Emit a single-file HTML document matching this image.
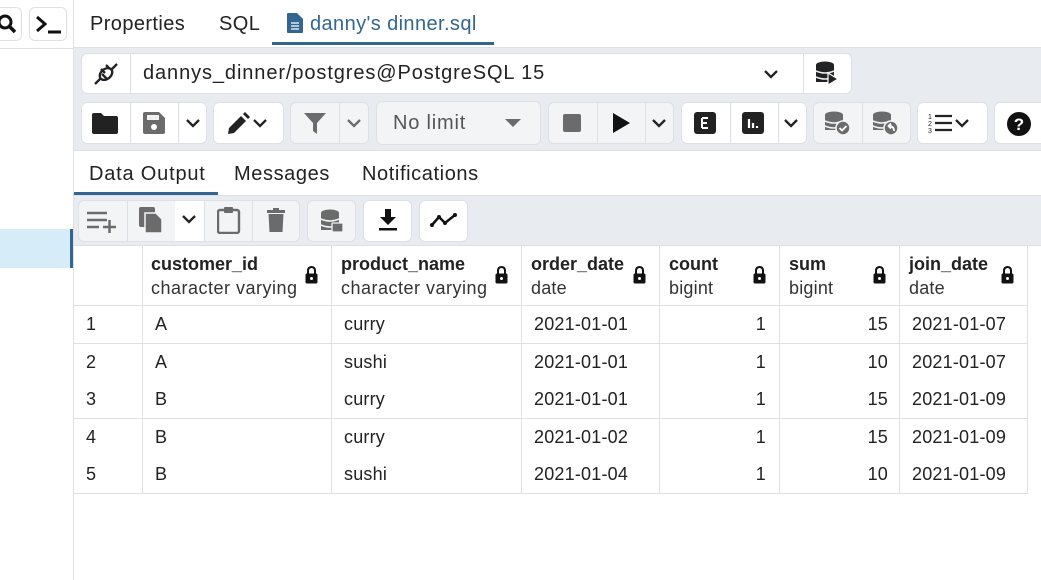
<!DOCTYPE html>
<html><head><style>
*{box-sizing:border-box;margin:0;padding:0}
body{width:1041px;height:580px;overflow:hidden;background:#fff;font-family:"Liberation Sans",sans-serif;color:#222;position:relative}
.a{position:absolute}
.btn{position:absolute;background:#fff;border:1px solid #dde0e6;border-radius:6px}
.sep{position:absolute;top:0;bottom:0;width:1px;background:#dde0e6}
.t{font-size:20px;position:absolute;white-space:nowrap;letter-spacing:0.4px}
.cell{position:absolute;font-size:18px;white-space:nowrap;color:#222;letter-spacing:0.2px}
.hl{position:absolute;height:1px;background:#dde0e6}
.vl{position:absolute;width:1px;background:#dde0e6}
svg{position:absolute}
</style></head><body>
<!-- sidebar -->
<div class="a" style="left:73px;top:0;width:1px;height:580px;background:#dde0e6"></div>
<div class="a" style="left:0;top:48px;width:73px;height:1px;background:#dde0e6"></div>
<div class="a" style="left:0;top:229px;width:71px;height:39px;background:#d6ecf9"></div>
<div class="a" style="left:70px;top:229px;width:3px;height:39px;background:#326690"></div>
<div class="btn" style="left:-10px;top:7px;width:32px;height:34px"></div>
<svg style="left:0;top:13px" width="20" height="22" viewBox="0 0 20 22"><circle cx="5" cy="9" r="6" fill="none" stroke="#111" stroke-width="3"/><line x1="9" y1="13" x2="15" y2="19" stroke="#111" stroke-width="3.5"/></svg>
<div class="btn" style="left:29px;top:7px;width:38px;height:34px"></div>
<svg style="left:35px;top:14px" width="28" height="20" viewBox="0 0 28 20"><path d="M2 3 L10 10 L2 17" fill="none" stroke="#111" stroke-width="3"/><line x1="13" y1="18" x2="26" y2="18" stroke="#111" stroke-width="3"/></svg>
<!-- tabs -->
<div class="t" style="left:90px;top:13px">Properties</div>
<div class="t" style="left:219px;top:13px">SQL</div>
<svg style="left:287px;top:13px" width="16" height="20" viewBox="0 0 16 20"><path d="M0 1 Q0 0 1 0 H10 L16 6 V19 Q16 20 15 20 H1 Q0 20 0 19Z" fill="#326690"/><path d="M4 10H12M4 13H12M4 16H12" stroke="#fff" stroke-width="1.3"/></svg>
<div class="t" style="left:310px;top:13px;color:#326690">danny's dinner.sql</div>
<div class="a" style="left:272px;top:42px;width:222px;height:3px;background:#326690"></div>
<div class="a" style="left:74px;top:47px;width:967px;height:1px;background:#dde0e6"></div>
<!-- toolbar area -->
<div class="a" style="left:74px;top:48px;width:967px;height:102px;background:#e8ebf0"></div>
<div class="btn" style="left:81px;top:53px;width:771px;height:41px"><div class="sep" style="left:48px"></div><div class="sep" style="left:721px"></div></div>
<svg style="left:92px;top:61px" width="28" height="26" viewBox="0 0 28 26"><g fill="none" stroke="#222" stroke-width="2.3"><ellipse cx="14" cy="13" rx="7" ry="5" transform="rotate(-40 14 13)"/><path d="M3 23 L8 18 M20 8 L25 3 M9 8 L13 12 M14 4 L18 8 M10 13 L15 18"/></g></svg>
<div class="t" style="left:143px;top:62px;letter-spacing:0.9px">dannys_dinner/postgres@PostgreSQL 15</div>
<svg style="left:763px;top:69px" width="16" height="10" viewBox="0 0 16 10"><path d="M2 2 L8 8 L14 2" fill="none" stroke="#222" stroke-width="2.3"/></svg>
<svg style="left:815px;top:61px" width="24" height="25" viewBox="0 0 24 25"><ellipse cx="10" cy="4" rx="9" ry="3.5" fill="#222"/><rect x="1" y="4" width="18" height="17" fill="#222"/><path d="M1 10 Q10 14 19 10 M1 16 Q10 20 19 16" stroke="#e8ebf0" stroke-width="1.6" fill="none"/><path d="M13 12 L23 18 L13 24Z" fill="#222" stroke="#fff" stroke-width="1.2"/></svg>

<div class="btn" style="left:81px;top:102px;width:126px;height:42px"><div class="sep" style="left:48px"></div><div class="sep" style="left:96px"></div></div>
<svg style="left:92px;top:113px" width="26" height="21" viewBox="0 0 26 21"><path d="M0 2 Q0 0 2 0 H9 L12 3 H24 Q26 3 26 5 V19 Q26 21 24 21 H2 Q0 21 0 19Z" fill="#222"/></svg>
<svg style="left:143px;top:112px" width="22" height="22" viewBox="0 0 22 22"><path d="M0 2 Q0 0 2 0 H16 L22 6 V20 Q22 22 20 22 H2 Q0 22 0 20Z" fill="#6b6b6b"/><rect x="4" y="3" width="12" height="5" fill="#fff" opacity=".9"/><circle cx="11" cy="15" r="3" fill="#fff"/></svg>
<svg style="left:185px;top:118px" width="16" height="10" viewBox="0 0 16 10"><path d="M2 2 L8 8 L14 2" fill="none" stroke="#222" stroke-width="2.3"/></svg>
<div class="btn" style="left:213px;top:102px;width:71px;height:42px"></div>
<svg style="left:226px;top:112px" width="44" height="24" viewBox="0 0 44 24"><path d="M2 22 L3 16 L15 4 L20 9 L8 21Z" fill="#222"/><path d="M17 2 L19 0 L24 5 L22 7Z" fill="#222"/><path d="M28 8 L34 14 L40 8" fill="none" stroke="#222" stroke-width="2.3"/></svg>
<div class="btn" style="left:290px;top:102px;width:79px;height:42px;background:#f3f4f6"><div class="sep" style="left:48px"></div></div>
<svg style="left:304px;top:113px" width="22" height="21" viewBox="0 0 22 21"><path d="M0 0 H22 L13 10 V21 L9 18 V10Z" fill="#6b6b6b"/></svg>
<svg style="left:346px;top:118px" width="16" height="10" viewBox="0 0 16 10"><path d="M2 2 L8 8 L14 2" fill="none" stroke="#6b6b6b" stroke-width="2.3"/></svg>
<div class="btn" style="left:376px;top:101px;width:165px;height:44px;background:#f3f4f6"></div>
<div class="t" style="left:393px;top:112px;color:#555;letter-spacing:0.8px">No limit</div>
<svg style="left:505px;top:118px" width="16" height="10" viewBox="0 0 16 10"><path d="M0 1 H16 L8 9Z" fill="#6b6b6b"/></svg>
<div class="btn" style="left:548px;top:102px;width:126px;height:42px;background:#f3f4f6"><div class="sep" style="left:48px"></div><div class="sep" style="left:96px"></div></div>
<div class="a" style="left:563px;top:114px;width:18px;height:18px;background:#6b6b6b;border-radius:2px"></div>
<svg style="left:613px;top:113px" width="18" height="20" viewBox="0 0 18 20"><path d="M0 0 L17 10 L0 20Z" fill="#111"/></svg>
<svg style="left:651px;top:118px" width="16" height="10" viewBox="0 0 16 10"><path d="M2 2 L8 8 L14 2" fill="none" stroke="#222" stroke-width="2.3"/></svg>
<div class="btn" style="left:681px;top:102px;width:126px;height:42px"><div class="sep" style="left:48px"></div><div class="sep" style="left:96px"></div></div>
<svg style="left:694px;top:112px" width="22" height="22" viewBox="0 0 22 22"><rect width="22" height="22" rx="3" fill="#222"/><path d="M8 6 H14 M8 11 H13 M8 16 H14 M8 6 V16" stroke="#fff" stroke-width="2" fill="none"/></svg>
<svg style="left:742px;top:112px" width="22" height="22" viewBox="0 0 22 22"><rect width="22" height="22" rx="3" fill="#222"/><path d="M7 7 V16 M11 11 V16 M15 14 V16" stroke="#fff" stroke-width="2.2"/></svg>
<svg style="left:783px;top:118px" width="16" height="10" viewBox="0 0 16 10"><path d="M2 2 L8 8 L14 2" fill="none" stroke="#222" stroke-width="2.3"/></svg>
<div class="btn" style="left:813px;top:102px;width:98px;height:42px;background:#f3f4f6"><div class="sep" style="left:48px"></div></div>
<svg style="left:824px;top:111px" width="28" height="26" viewBox="0 0 28 26"><ellipse cx="10" cy="4" rx="9" ry="3.5" fill="#6b6b6b"/><rect x="1" y="4" width="18" height="15" fill="#6b6b6b"/><path d="M1 10 Q10 14 19 10 M1 15 Q10 19 19 15" stroke="#f3f4f6" stroke-width="1.6" fill="none"/><circle cx="19" cy="17" r="7" fill="#6b6b6b" stroke="#f3f4f6" stroke-width="1.5"/><path d="M15.5 17 L18 19.5 L22.5 15" stroke="#fff" stroke-width="1.8" fill="none"/></svg>
<svg style="left:872px;top:111px" width="28" height="26" viewBox="0 0 28 26"><ellipse cx="10" cy="4" rx="9" ry="3.5" fill="#6b6b6b"/><rect x="1" y="4" width="18" height="15" fill="#6b6b6b"/><path d="M1 10 Q10 14 19 10 M1 15 Q10 19 19 15" stroke="#f3f4f6" stroke-width="1.6" fill="none"/><circle cx="19" cy="17" r="7" fill="#6b6b6b" stroke="#f3f4f6" stroke-width="1.5"/><path d="M22 20 Q22 15 17 15 M19 12.5 L16.5 15 L19 17.5" stroke="#fff" stroke-width="1.8" fill="none"/></svg>
<div class="btn" style="left:917px;top:102px;width:71px;height:42px"></div>
<svg style="left:928px;top:112px" width="46" height="22" viewBox="0 0 46 22"><text x="0" y="7" font-size="7" font-family="Liberation Sans" fill="#222">1</text><text x="0" y="14" font-size="7" font-family="Liberation Sans" fill="#222">2</text><text x="0" y="21" font-size="7" font-family="Liberation Sans" fill="#222">3</text><path d="M7 4 H24 M7 11 H24 M7 18 H24" stroke="#222" stroke-width="2.3"/><path d="M28 8 L34 14 L40 8" fill="none" stroke="#222" stroke-width="2.3"/></svg>
<div class="btn" style="left:994px;top:102px;width:60px;height:42px"></div>
<svg style="left:1007px;top:112px" width="24" height="24" viewBox="0 0 24 24"><circle cx="12" cy="12" r="12" fill="#111"/><text x="12" y="18" text-anchor="middle" font-size="17" font-weight="bold" font-family="Liberation Sans" fill="#fff">?</text></svg>
<div class="a" style="left:74px;top:150px;width:967px;height:1px;background:#dde0e6"></div>
<!-- data output tabs -->
<div class="t" style="left:89px;top:163px;letter-spacing:0.8px">Data Output</div>
<div class="t" style="left:234px;top:163px;letter-spacing:0.6px">Messages</div>
<div class="t" style="left:362px;top:163px;letter-spacing:0.6px">Notifications</div>
<div class="a" style="left:74px;top:192px;width:144px;height:3px;background:#326690"></div>
<div class="a" style="left:74px;top:195px;width:967px;height:50px;background:#e8ebf0;border-top:1px solid #dde0e6"></div>
<div class="btn" style="left:78px;top:200px;width:222px;height:42px;background:#f3f4f6"><div class="sep" style="left:48px"></div><div class="sep" style="left:96px"></div><div class="sep" style="left:125px"></div><div class="sep" style="left:173px"></div></div>
<div class="a" style="left:175px;top:201px;width:29px;height:40px;background:#fff"></div>
<svg style="left:87px;top:211px" width="30" height="22" viewBox="0 0 30 22"><path d="M0 2 H20 M0 9 H20 M0 16 H12 M16 16 H29 M22.5 9 V22" stroke="#6b6b6b" stroke-width="2.5"/></svg>
<svg style="left:139px;top:207px" width="24" height="27" viewBox="0 0 24 27"><rect x="0" y="0" width="16" height="20" rx="2" fill="#6b6b6b"/><path d="M6 6 H17 L23 12 V26 H6Z" fill="#6b6b6b" stroke="#f3f4f6" stroke-width="1.5"/></svg>
<svg style="left:181px;top:214px" width="16" height="10" viewBox="0 0 16 10"><path d="M2 2 L8 8 L14 2" fill="none" stroke="#222" stroke-width="2.3"/></svg>
<svg style="left:217px;top:207px" width="24" height="27" viewBox="0 0 24 27"><rect x="1" y="3" width="21" height="23" rx="2" fill="none" stroke="#6b6b6b" stroke-width="2.4"/><rect x="7" y="0" width="9" height="6" rx="1" fill="#6b6b6b"/></svg>
<svg style="left:267px;top:208px" width="18" height="24" viewBox="0 0 18 24"><rect x="0" y="2" width="18" height="3" fill="#6b6b6b"/><rect x="6" y="0" width="6" height="3" fill="#6b6b6b"/><path d="M1.5 6 H16.5 L15.5 24 H2.5Z" fill="#6b6b6b"/></svg>
<div class="btn" style="left:307px;top:200px;width:49px;height:42px;background:#f3f4f6"></div>
<svg style="left:320px;top:209px" width="24" height="24" viewBox="0 0 24 24"><ellipse cx="10" cy="4" rx="9" ry="3.5" fill="#6b6b6b"/><rect x="1" y="4" width="18" height="17" fill="#6b6b6b"/><path d="M1 10 Q10 14 19 10 M1 16 Q10 20 19 16" stroke="#f3f4f6" stroke-width="1.6" fill="none"/><rect x="12" y="14" width="11" height="9" rx="1" fill="#6b6b6b" stroke="#f3f4f6" stroke-width="1.3"/></svg>
<div class="btn" style="left:363px;top:200px;width:49px;height:42px"></div>
<svg style="left:379px;top:209px" width="18" height="22" viewBox="0 0 18 22"><path d="M6 0 H12 V8 H17 L9 16 L1 8 H6Z" fill="#111"/><rect x="0" y="19" width="18" height="2.5" fill="#111"/></svg>
<div class="btn" style="left:419px;top:200px;width:49px;height:42px"></div>
<svg style="left:430px;top:212px" width="28" height="16" viewBox="0 0 28 16"><path d="M2 13 L9 5 L15 11 L25 3" fill="none" stroke="#111" stroke-width="2.5"/><circle cx="2" cy="13" r="2" fill="#111"/><circle cx="9" cy="5" r="2" fill="#111"/><circle cx="15" cy="11" r="2" fill="#111"/><circle cx="25" cy="3" r="2" fill="#111"/></svg>
<!-- table -->
<div class="hl" style="left:74px;top:245px;width:967px"></div>
<div class="hl" style="left:74px;top:305px;width:954px"></div>
<div class="hl" style="left:74px;top:343px;width:954px"></div>
<div class="hl" style="left:74px;top:418px;width:954px"></div>
<div class="hl" style="left:74px;top:493px;width:954px"></div>
<div class="vl" style="left:142px;top:245px;height:248px"></div>
<div class="vl" style="left:331px;top:245px;height:248px"></div>
<div class="vl" style="left:521px;top:245px;height:248px"></div>
<div class="vl" style="left:659px;top:245px;height:248px"></div>
<div class="vl" style="left:779px;top:245px;height:248px"></div>
<div class="vl" style="left:899px;top:245px;height:248px"></div>
<div class="vl" style="left:1027px;top:245px;height:248px"></div>

<div class="cell" style="left:151px;top:254px;font-weight:bold;letter-spacing:0">customer_id</div><div class="cell" style="left:151px;top:278px;color:#333;letter-spacing:0.5px">character varying</div>
<div class="cell" style="left:341px;top:254px;font-weight:bold;letter-spacing:0">product_name</div><div class="cell" style="left:341px;top:278px;color:#333;letter-spacing:0.5px">character varying</div>
<div class="cell" style="left:531px;top:254px;font-weight:bold;letter-spacing:0">order_date</div><div class="cell" style="left:531px;top:278px;color:#333">date</div>
<div class="cell" style="left:669px;top:254px;font-weight:bold;letter-spacing:0">count</div><div class="cell" style="left:669px;top:278px;color:#333">bigint</div>
<div class="cell" style="left:789px;top:254px;font-weight:bold;letter-spacing:0">sum</div><div class="cell" style="left:789px;top:278px;color:#333">bigint</div>
<div class="cell" style="left:909px;top:254px;font-weight:bold;letter-spacing:0">join_date</div><div class="cell" style="left:909px;top:278px;color:#333">date</div>
<svg width="0" height="0"><defs><g id="lk"><path d="M4 8 V5 Q4 1 7.5 1 Q11 1 11 5 V8" fill="none" stroke="#111" stroke-width="2"/><rect x="1.5" y="7.5" width="12" height="10" rx="1.5" fill="#111"/><circle cx="7.5" cy="12.5" r="1.5" fill="#fff"/></g></defs></svg>
<svg style="left:304px;top:266px" width="15" height="18"><use href="#lk"/></svg>
<svg style="left:494px;top:266px" width="15" height="18"><use href="#lk"/></svg>
<svg style="left:632px;top:266px" width="15" height="18"><use href="#lk"/></svg>
<svg style="left:752px;top:266px" width="15" height="18"><use href="#lk"/></svg>
<svg style="left:872px;top:266px" width="15" height="18"><use href="#lk"/></svg>
<svg style="left:1000px;top:266px" width="15" height="18"><use href="#lk"/></svg>

<div class="cell" style="left:86px;top:314px">1</div><div class="cell" style="left:155px;top:314px">A</div><div class="cell" style="left:344px;top:314px">curry</div><div class="cell" style="left:534px;top:314px">2021-01-01</div><div class="cell" style="left:740px;top:314px;width:26px;text-align:right">1</div><div class="cell" style="left:850px;top:314px;width:38px;text-align:right">15</div><div class="cell" style="left:912px;top:314px">2021-01-07</div>
<div class="cell" style="left:86px;top:352px">2</div><div class="cell" style="left:155px;top:352px">A</div><div class="cell" style="left:344px;top:352px">sushi</div><div class="cell" style="left:534px;top:352px">2021-01-01</div><div class="cell" style="left:740px;top:352px;width:26px;text-align:right">1</div><div class="cell" style="left:850px;top:352px;width:38px;text-align:right">10</div><div class="cell" style="left:912px;top:352px">2021-01-07</div>
<div class="cell" style="left:86px;top:389px">3</div><div class="cell" style="left:155px;top:389px">B</div><div class="cell" style="left:344px;top:389px">curry</div><div class="cell" style="left:534px;top:389px">2021-01-01</div><div class="cell" style="left:740px;top:389px;width:26px;text-align:right">1</div><div class="cell" style="left:850px;top:389px;width:38px;text-align:right">15</div><div class="cell" style="left:912px;top:389px">2021-01-09</div>
<div class="cell" style="left:86px;top:427px">4</div><div class="cell" style="left:155px;top:427px">B</div><div class="cell" style="left:344px;top:427px">curry</div><div class="cell" style="left:534px;top:427px">2021-01-02</div><div class="cell" style="left:740px;top:427px;width:26px;text-align:right">1</div><div class="cell" style="left:850px;top:427px;width:38px;text-align:right">15</div><div class="cell" style="left:912px;top:427px">2021-01-09</div>
<div class="cell" style="left:86px;top:464px">5</div><div class="cell" style="left:155px;top:464px">B</div><div class="cell" style="left:344px;top:464px">sushi</div><div class="cell" style="left:534px;top:464px">2021-01-04</div><div class="cell" style="left:740px;top:464px;width:26px;text-align:right">1</div><div class="cell" style="left:850px;top:464px;width:38px;text-align:right">10</div><div class="cell" style="left:912px;top:464px">2021-01-09</div>
</body></html>
